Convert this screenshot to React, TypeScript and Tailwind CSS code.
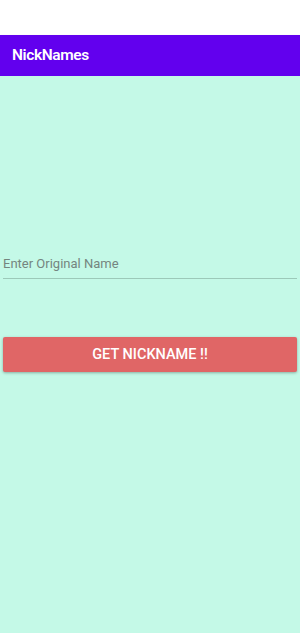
import React, { useState } from 'react';

export default function App() {
  const [name, setName] = useState('');
  return (
    <div className="w-[300px] h-[633px] flex flex-col bg-white" style={{ fontFamily: 'Roboto, "Liberation Sans", sans-serif' }}>
      <div className="h-[35px] bg-white" />
      <div className="h-[41px] bg-[#6200ee] flex items-center px-3 shadow-[0_1px_2px_rgba(0,0,0,0.2)]">
        <h1 className="text-white text-[15.5px] font-semibold tracking-tight">NickNames</h1>
      </div>
      <div className="flex-1 bg-[#c4f9e7] flex flex-col px-[3px]">
        <div className="pt-[175px]">
          <input
            value={name}
            onChange={(e) => setName(e.target.value)}
            placeholder="Enter Original Name"
            className="w-full h-[28px] bg-transparent text-[13px] text-gray-800 placeholder:text-[#75857f] border-b-[1.5px] border-[#9cc9b9] outline-none pb-[2px]"
          />
        </div>
        <button className="mt-[58px] h-[35px] w-full bg-[#e06666] text-white text-[14.5px] font-medium rounded-[2px] shadow-[0_1px_3px_rgba(0,0,0,0.3)]">
          GET NICKNAME !!
        </button>
      </div>
    </div>
  );
}
